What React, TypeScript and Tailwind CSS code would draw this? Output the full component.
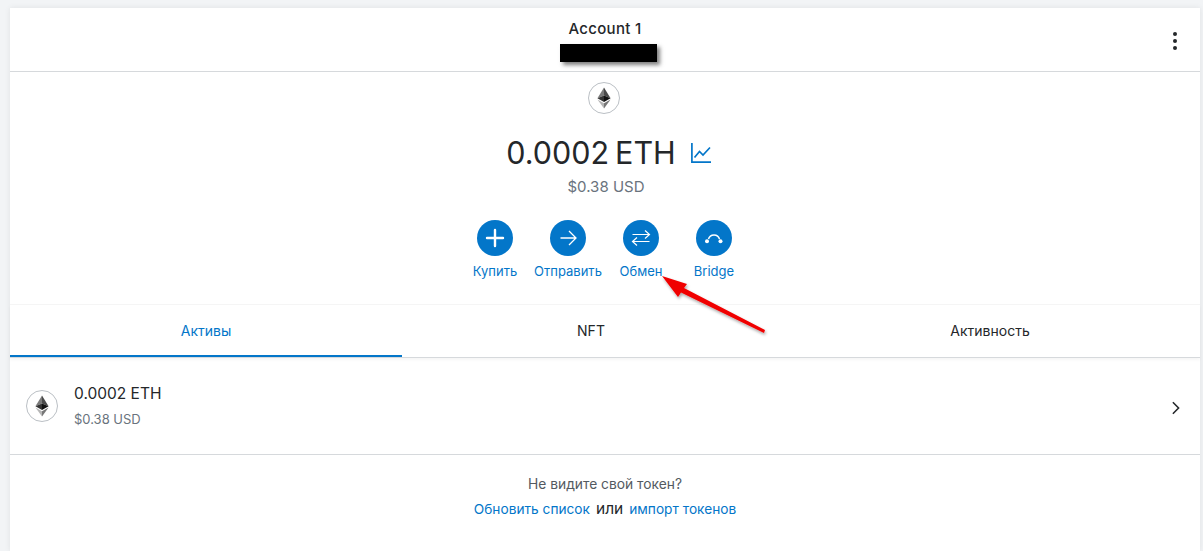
const font = { fontFamily: "Inter, 'Liberation Sans', sans-serif" };

const EthIcon = () => (
  <div className="flex h-8 w-8 items-center justify-center rounded-full border border-[#bbc0c5] bg-white">
    <svg viewBox="0 0 16 24" className="h-[22px] w-[14px]">
      <path d="M8 0 L0.5 12.2 L8 9 Z" fill="#7a7a7a" />
      <path d="M8 0 L15.5 12.2 L8 9 Z" fill="#4a4a4a" />
      <path d="M8 9 L0.5 12.2 L8 16.6 Z" fill="#333" />
      <path d="M8 9 L15.5 12.2 L8 16.6 Z" fill="#111" />
      <path d="M0.5 13.6 L8 24 L8 18 Z" fill="#b5b5b5" />
      <path d="M15.5 13.6 L8 24 L8 18 Z" fill="#777" />
    </svg>
  </div>
);

const actions = [
  {
    label: "Купить",
    icon: <path d="M12 4v16M4 12h16" stroke="white" strokeWidth="2.4" strokeLinecap="round" fill="none" />,
  },
  {
    label: "Отправить",
    icon: <path d="M4.5 12h15M13 5l7 7-7 7" stroke="white" strokeWidth="1.3" fill="none" />,
  },
  {
    label: "Обмен",
    icon: <path d="M3.5 8.5h17M16 4.5l4.5 4-4.5 4M20.5 15.5h-17M8 11.5l-4.5 4 4.5 4" stroke="white" strokeWidth="1.2" fill="none" />,
  },
  {
    label: "Bridge",
    icon: (
      <>
        <path d="M6.5 13C8 7.5 16 7.5 17.5 13" stroke="white" strokeWidth="1.5" fill="none" />
        <circle cx="5" cy="15.3" r="2" fill="white" />
        <circle cx="18.5" cy="15.3" r="2" fill="white" />
      </>
    ),
  },
];

export default function App() {
  return (
    <div className="relative h-[551px] overflow-hidden bg-[#f2f4f6] pl-[10px] pr-[3px] pt-2" style={font}>
      <div className="h-full bg-white shadow-[0_0_6px_rgba(0,0,0,0.08)]">
        <header className="relative flex h-[64px] flex-col items-center border-b border-[#d6d9dc] pt-[12px]">
          <div className="text-[15px] font-medium leading-[17px] tracking-[0.3px] text-[#24272a]">Account 1</div>
          <div className="ml-[7px] mt-[7px] h-[18px] w-[97px] bg-black shadow-[3px_3px_4px_rgba(0,0,0,0.5)]" />
          <div className="absolute right-[23px] top-[24px] flex flex-col gap-[3px]">
            <span className="h-1 w-1 rounded-full bg-[#24272a]" />
            <span className="h-1 w-1 rounded-full bg-[#24272a]" />
            <span className="h-1 w-1 rounded-full bg-[#24272a]" />
          </div>
        </header>

        <section className="flex h-[233px] flex-col items-center border-b border-[#f5f5f5] pr-[2px] pt-[10px]">
          <EthIcon />
          <div className="ml-[9px] mt-[17px] flex items-center">
            <span className="text-[30.5px] leading-[44px] text-[#24272a]">0.0002</span>
            <span className="ml-[6px] text-[30.5px] leading-[44px] text-[#24272a]">ETH</span>
            <svg viewBox="0 0 20 20" className="ml-[15px] h-5 w-5" fill="none" stroke="#0376c9" strokeWidth="1.7">
              <path d="M0.9 0v19.1H20" />
              <path d="M3.5 14.5l5-6 3.5 3.5 7-7.5" />
            </svg>
          </div>
          <div className="ml-[4px] mt-[2px] text-[15px] leading-[20px] text-[#6a737d]">$0.38 USD</div>
          <div className="ml-[1px] mt-[23px] flex">
            {actions.map((a) => (
              <div key={a.label} className="flex w-[73px] flex-col items-center">
                <div className="flex h-9 w-9 items-center justify-center rounded-full bg-[#0376c9]">
                  <svg viewBox="0 0 24 24" className="h-6 w-6">
                    {a.icon}
                  </svg>
                </div>
                <span className="mt-[6px] whitespace-nowrap text-[13px] leading-[18px] text-[#0376c9]">{a.label}</span>
              </div>
            ))}
          </div>
        </section>

        <nav className="grid h-[53px] grid-cols-[392px_378px_1fr] border-b border-[#d6d9dc] text-[14px] shadow-[0_2px_3px_rgba(0,0,0,0.04)]">
          <div className="flex items-center justify-center border-b-2 border-[#0376c9] text-[#0376c9]">Активы</div>
          <div className="flex items-center justify-center pb-[2px] text-[#24272a]">NFT</div>
          <div className="flex items-center justify-center pb-[2px] text-[#24272a]">Активность</div>
        </nav>

        <div className="flex h-[97px] items-center border-b border-[#d6d9dc] pl-4 pr-[20px]">
          <EthIcon />
          <div className="ml-4 flex-1">
            <div className="text-[15.5px] leading-[22px] text-[#24272a]">0.0002 ETH</div>
            <div className="mt-[4px] text-[13px] leading-[20px] text-[#6a737d]">$0.38 USD</div>
          </div>
          <svg viewBox="0 0 10 16" className="mt-1 h-[14px] w-[9px]" fill="none" stroke="#24272a" strokeWidth="1.8">
            <path d="M2 1.5L8.5 8 2 14.5" />
          </svg>
        </div>

        <div className="flex flex-col items-center pt-[19px]">
          <div className="text-[13.8px] leading-5 text-[#535a61]">Не видите свой токен?</div>
          <div className="mt-[5px] flex items-center gap-[6px] text-[13.7px] leading-5 text-[#0376c9]">
            <span>Обновить список</span>
            <span className="text-[15.5px] text-[#24272a]">или</span>
            <span>импорт токенов</span>
          </div>
        </div>
      </div>

      <svg className="pointer-events-none absolute left-[655px] top-[270px] h-[70px] w-[120px]" viewBox="0 0 120 70">
        <defs>
          <filter id="s" x="-20%" y="-20%" width="140%" height="140%">
            <feDropShadow dx="1" dy="2" stdDeviation="1.5" floodColor="#000" floodOpacity="0.35" />
          </filter>
        </defs>
        <path d="M7 6L32 14L29 18L110 60L109 63L26 22.5L23 27Z" fill="#f00000" filter="url(#s)" />
      </svg>
    </div>
  );
}
